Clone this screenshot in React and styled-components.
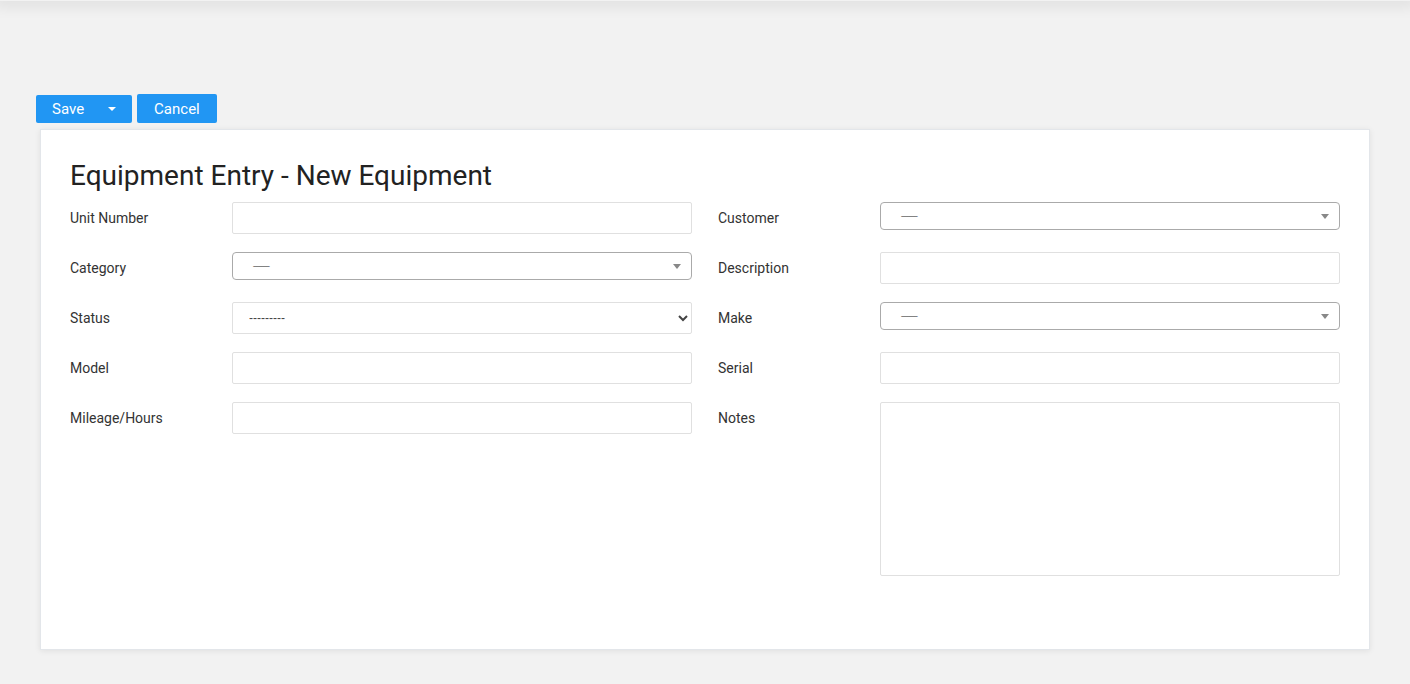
import React from 'react';
import styled, { createGlobalStyle } from 'styled-components';

const Global = createGlobalStyle`
  body {
    margin: 0;
    background: #f2f2f2;
    font-family: Roboto, "Liberation Sans", sans-serif;
    color: #222;
  }
`;

const TopShade = styled.div`
  height: 1px;
  box-shadow: 0 0 14px 6px rgba(0,0,0,0.08);
`;

const Page = styled.div`
  padding: 93px 40px 34px 36px;
`;

const Toolbar = styled.div`
  display: flex;
  gap: 5px;
  height: 29px;
  margin-bottom: 6px;
`;

const Button = styled.button`
  display: flex;
  align-items: center;
  background: #2196f3;
  color: #fff;
  border: none;
  border-radius: 2px;
  font: 15px Roboto, sans-serif;
  padding: 0 ${p => p.$pad || 17}px;
  height: ${p => p.$h || 29}px;
  margin-top: ${p => p.$top || 0}px;
  cursor: pointer;
`;

const Caret = styled.span`
  margin-left: 24px;
  border-left: 4px solid transparent;
  border-right: 4px solid transparent;
  border-top: 4px solid #fff;
`;

const Card = styled.div`
  margin-left: 4px;
  background: #fff;
  border: 1px solid #e3e6ea;
  box-shadow: 0 1px 6px rgba(0,0,0,0.08);
  height: 521px;
  box-sizing: border-box;
  padding: 28px 29px;
`;

const Title = styled.h2`
  margin: 0 0 8px;
  font-weight: 400;
  font-size: 28px;
  line-height: 36px;
  color: #222;
`;

const Columns = styled.div`
  display: grid;
  grid-template-columns: 622px 622px;
  gap: 26px;
`;

const Col = styled.div`
  display: flex;
  flex-direction: column;
  gap: 18px;
`;

const Row = styled.div`
  display: grid;
  grid-template-columns: 162px 1fr;
  align-items: start;
  min-height: 32px;
`;

const Label = styled.label`
  font-size: 14px;
  color: #333;
  line-height: 32px;
`;

const Input = styled.input`
  height: 32px;
  box-sizing: border-box;
  border: 1px solid #e0e0e0;
  border-radius: 2px;
  width: 100%;
`;

const TextArea = styled.textarea`
  height: 174px;
  box-sizing: border-box;
  border: 1px solid #e0e0e0;
  border-radius: 2px;
  width: 100%;
  resize: none;
`;

const NativeSelect = styled.select`
  height: 32px;
  width: 100%;
  box-sizing: border-box;
  border: 1px solid #e0e0e0;
  border-radius: 2px;
  background: #fff;
  padding: 0 12px;
  font-size: 12px;
  color: #444;
`;

const Select2 = styled.div`
  height: 28px;
  box-sizing: border-box;
  border: 1px solid #aaa;
  border-radius: 4px;
  display: flex;
  align-items: center;
  justify-content: space-between;
  padding: 0 10px 0 20px;
  font-size: 10px;
  color: #777;
  letter-spacing: -1px;
`;

const Arrow = styled.span`
  border-left: 4px solid transparent;
  border-right: 4px solid transparent;
  border-top: 5px solid #888;
`;

const Select = () => (
  <Select2><span>---------</span><Arrow /></Select2>
);

export default function App() {
  return (
    <>
      <Global />
      <TopShade />
      <Page>
        <Toolbar>
          <Button $pad={16} $h={28} $top={1}>Save<Caret /></Button>
          <Button>Cancel</Button>
        </Toolbar>
        <Card>
          <Title>Equipment Entry - New Equipment</Title>
          <Columns>
            <Col>
              <Row><Label>Unit Number</Label><Input /></Row>
              <Row><Label>Category</Label><Select /></Row>
              <Row><Label>Status</Label><NativeSelect><option>---------</option></NativeSelect></Row>
              <Row><Label>Model</Label><Input /></Row>
              <Row><Label>Mileage/Hours</Label><Input /></Row>
            </Col>
            <Col>
              <Row><Label>Customer</Label><Select /></Row>
              <Row><Label>Description</Label><Input /></Row>
              <Row><Label>Make</Label><Select /></Row>
              <Row><Label>Serial</Label><Input /></Row>
              <Row><Label>Notes</Label><TextArea /></Row>
            </Col>
          </Columns>
        </Card>
      </Page>
    </>
  );
}
